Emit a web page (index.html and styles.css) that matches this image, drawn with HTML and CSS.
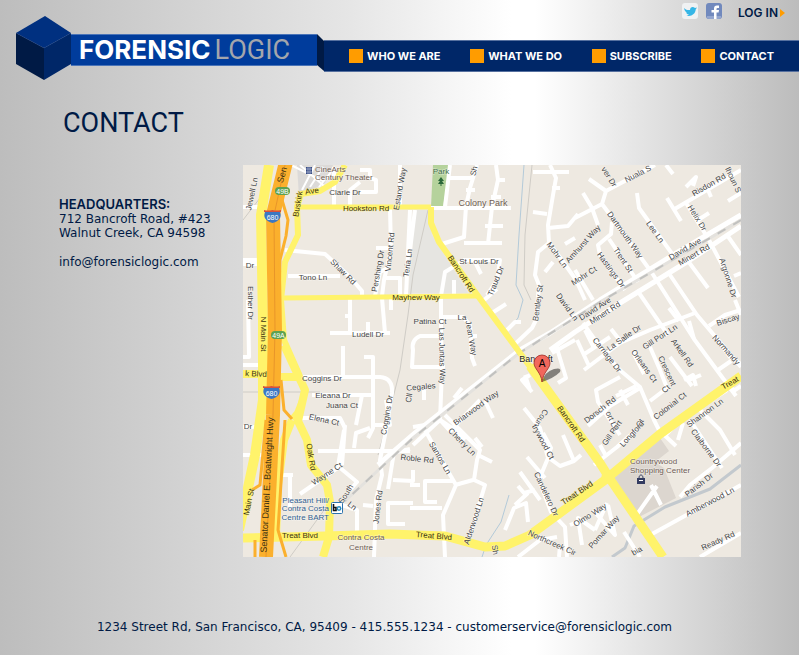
FILE: index.html
```html
<!DOCTYPE html>
<html lang="en">
<head>
<meta charset="utf-8">
<title>Forensic Logic - Contact</title>
<meta name="viewport" content="width=device-width, initial-scale=1">
<link rel="stylesheet" href="styles.css">
</head>
<body>
<header class="header">
  <a class="brand" href="#">
    <svg class="cube" viewBox="0 0 55 64" aria-hidden="true">
      <path fill="#003080" d="M29 0 55 17 28 32 0 17z"/>
      <path fill="#001a45" d="M0 17 28 32V64L0 48z"/>
      <path fill="#002768" d="M55 17 28 32V64L55 48z"/>
      <path fill="none" stroke="#1b4590" stroke-width=".4" d="M0 17 28 32 55 17"/>
    </svg>
    <span class="ribbon"><b>FORENSIC</b><span class="light">LOGIC</span></span>
    <svg class="fold" viewBox="0 0 7 37" aria-hidden="true"><path fill="#001a45" d="M0 0 7 7V37L0 31z"/></svg>
  </a>
  <div class="side">
    <div class="utility">
      <a class="social" href="#" aria-label="Twitter">
        <svg viewBox="0 0 16 16"><rect width="16" height="16" rx="3" fill="#f0f2f3"/><path fill="#35b6e6" d="M2 5c2 2 4 2.300 6 2 0-3 3-4 5-2l2-.5-1.300 2C13.500 11 9 14 4.500 12.500c1.500-.2 2-.6 2.500-1-2-.4-2.500-1.200-3-2h1C3 8.500 2.500 7 2 5z"/></svg>
      </a>
      <a class="social" href="#" aria-label="Facebook">
        <svg viewBox="0 0 16 16"><rect width="16" height="16" rx="3" fill="#7189bd"/><path fill="#94a6cf" d="M1 13h14v1.500q-1 1.500-3 1.500H4q-2 0-3-1.500z"/><path fill="#fff" d="M8 16V9.500H5.500V7H8V5.500C8 3.500 9 2.500 11 2.500h2V5h-1.500q-1 0-1 1v1H13l-.4 2.500h-2.100V16z"/></svg>
      </a>
      <a class="login" href="#">LOG IN<svg viewBox="0 0 5 8" aria-hidden="true"><path fill="#ff9c00" d="M0 0 5 4 0 8z"/></svg></a>
    </div>
    <nav class="nav">
      <a href="#">WHO WE ARE</a>
      <a href="#">WHAT WE DO</a>
      <a href="#">SUBSCRIBE</a>
      <a href="#">CONTACT</a>
    </nav>
  </div>
</header>

<main class="main">
  <h1>CONTACT</h1>
  <div class="columns">
    <address class="office">
      <h2>HEADQUARTERS:</h2>
      <p>712 Bancroft Road, #423<br>Walnut Creek, CA 94598</p>
      <p><a href="mailto:info@forensiclogic.com">info@forensiclogic.com</a></p>
    </address>
    <svg class="map" viewBox="243 165 498 392" role="img" aria-label="Map of Bancroft Road, Walnut Creek">
      <rect class="land" x="243" y="165" width="498" height="392"/>
      <path fill="#b5d29c" d="M433 165h17l-7 42h-12z"/>
      <path fill="#e6e5e1" d="M413 210h15l4 25 36 58h-60l5-40z"/>
      <path fill="#dcd6cf" d="M612 478 660 438 669 451 655 462 664 468 676 498 637 518z"/>
      <path fill="#dcdad8" d="M297 165h36l-8 18-26 14z"/>
      <g class="water">
        <path d="M524 165 519 235 516 285 523 300 518 318 508 330"/>
        <path d="M509 495 501 522 486 545 482 557"/>
        <path class="wide" d="M741 465 710 489 665 507 634 526 625 548 612 557"/>
      </g>
      <g class="track">
        <path d="M532 165 525 235 524 285 531 300"/>
        <path d="M428 210 413 275 408 315 400 370 385 430 378 455"/>
        <path d="M243 220 270 185"/>
        <path d="M243 392H320M330 502 290 557"/>
      </g>
      <g class="road">
        <path d="M243 207H262M243 264H258M243 260H258M248 300 249 357H243M243 365H262M243 455H262M243 427H256"/>
        <path d="M334 167V206M350 206V190L360 182M360 192H376V180L370 178V170H360M400 165V205"/>
        <path d="M285 250 325 254 350 277 362 291V296M288 276H340"/>
        <path d="M390 208 391 250 384 280 382 296M375 296 380 272 388 268M384 278H400V296M410 210 406 296M415 210 410 250M376 248H390"/>
        <path d="M350 298V333M345 316H350M330 333H390M382 298 385 333M368 322V333M391 298V310"/>
        <path d="M343 346V376M364 357H373V428L368 438M362 395H373M300 377H380Q393 378 392 393L386 430M312 395H362L356 425M300 418H340L345 428M373 425H390L386 400"/>
        <path d="M345 425 342 465M354 448 356 433 370 428M318 451H410M290 475V507M275 475H293M300 494 339 467 357 482 350 490M338 466 344 430M386 430 380 460 382 475 376 500 374 557M383 425 386 430M394 452 388 489M392 453 410 449M393 480 413 481V470M413 503H388V524H405M357 533V510L350 508M363 505 373 506M342 505 351 508"/>
        <path class="fine" d="M291 165 323 181M300 165 324 186M315 165 302 190M323 167 310 187M331 172 319 187"/>
        <path d="M431 208H511M450 165 445 207M449 178H472M477 165 470 188 466 206 464 237 442 244M496 165 498 180 492 207 488 244M464 243H502M485 226H503M491 197H501M497 180H505M466 190H475"/>
        <path d="M463 260H500L497 280 487 295M463 261 445 272 441 296M454 280V296M474 260 481 274"/>
        <path d="M550 165 556 178 553 195 548 225 549 243M533 172H569M533 212 547 214M552 188H560M548 228 568 226 578 214M549 243 538 252 535 275 539 285 536 320 532 328 515 344M549 243 562 260 576 280 585 300M553 262 545 272"/>
        <path d="M507 330 515 322 521 322M492 313 506 304M483 301 497 289"/>
        <path d="M575 218 602 204 606 191 655 165M589 179 606 191M583 193 592 208 598 225M602 204 611 216 652 273M612 222 611 234 598 245 600 255 625 290M609 239 638 282M637 193 639 208 673 255M666 165 673 174M686 187 696 177 693 186M667 198 681 221M673 210 741 170M686 203 709 240 739 297M706 185 711 197M698 220 709 213M728 201 741 193M727 235 741 255M652 273 694 339 736 396M688 261 708 288M734 276 741 273M668 272 697 315 741 367"/>
        <path d="M575 238 565 244M575 270 593 300M637 290 668 335M585 330 593 346M583 355 610 337M577 340 589 366M583 323 605 354 621 371 640 387 654 420 662 436M611 329 622 343M584 370 620 343 650 330 695 313M650 347 660 370 667 388 650 401M633 352 644 374M694 339 689 321M689 380 701 375M669 308 679 321M696 386 693 375 684 380M670 357 692 386M620 377 596 390 598 402 620 435M628 405 620 390M616 396 636 386M588 426 610 406 640 388"/>
        <path d="M709 326 725 315 741 310M716 337 730 357 741 364M718 370 731 361M735 300 741 315M720 385 735 390 741 386M727 390 680 420 665 436M683 423 678 440M700 410 720 430 735 455M741 443 712 468 690 485 680 497M690 420 722 468M660 431 676 446M594 465 617 447 636 430M600 445 606 456"/>
        <path d="M652 534 741 485M624 532 640 557M700 557 741 533M633 520 657 486M651 485 661 505M595 530 578 518 582 545M593 510 615 535 608 505M607 503 595 530"/>
        <path d="M441 298V328L442 370 440 420 450 431 480 400M442 317H463L470 325 472 358 475 366M441 336H420Q411 340 413 350L412 367H445M454 398 462 388M440 420 455 430 465 440M413 427 425 425M413 445 440 420M485 401 493 418M424 400V388M470 336H477"/>
        <path d="M425 430 445 466 456 485 443 515 445 557M445 415 480 450 477 460 474 480 485 485 468 541M475 438 482 447M478 455 492 462M473 480 455 485M453 481H425V502H437M410 508H442M410 485H420"/>
        <path d="M525 375 530 390M530 375 522 380 532 392M556 345 566 378 558 383M552 353 575 340M524 408 540 428 548 458 543 470 539 480 551 512 565 527 567 557M527 457 545 478M520 472 530 486 540 500M549 458 560 466 574 461 581 455M543 433 551 448 547 456M563 435 574 461M518 486 524 493 535 490M505 530 514 508 526 503 528 522M528 493 515 505M555 515 570 508M518 557 540 540 557 537M560 545 559 557M570 525 582 520"/>
        <path d="M741 215 678 252 600 300 550 333 520 350 415 433 378 465M741 226 690 260 620 303 575 332 550 350" class="wide"/>
      </g>
      <path class="rail-bed" d="M741 220 600 302 518 354 413 438 345 501"/>
      <path class="rail" d="M741 220 600 302 518 354 413 438 345 501"/>
      <g class="yellow">
        <path stroke-width="10" d="M269 165 261 215 263 320 263 400 255 455 239 530"/>
        <path stroke-width="6" d="M345 165 335 182 320 191 301 194 297 207 298 235 285 262 281 300 284 340 299 374 305 393 297 413 292 419M281 377H302"/>
        <path stroke-width="8" d="M243 374H262M284 345 297 373 305 390 298 421 307 440 311 465 327 485 330 502 329 537 323 557M292 420 284 440 278 485 276 537M264 377H300"/>
        <path stroke-width="5" d="M297 207H431M283 298 477 296"/>
        <path stroke-width="9" d="M243 538 325 536 390 534 445 536 485 547 505 546 530 535 605 480 660 434 741 376"/>
        <path stroke-width="6" d="M431 207V223L439 242 478 296 534 372"/>
        <path stroke-width="9" d="M530 366 600 463 610 479 663 557"/>
        <circle cx="608" cy="477" r="5" stroke-width="3"/>
      </g>
      <g class="highway">
        <path stroke-width="14" d="M286 162 273 215 275 330 273 415 266 557"/>
        <path stroke-width="3" d="M282 200 288 220 286 236 280 260 279 300M281 380 284 410 292 419M266 420 260 485 252 490M285 420 278 530 286 557M255 557V540"/>
        <path class="median" d="M285 165 274 215 275 330 273 415 266 557"/>
      </g>

      <g class="label">
        <text transform="translate(252 194) rotate(-78)">Jewell Ln</text>
        <text x="345" y="192">Clarie Dr</text>
        <text transform="translate(400 189) rotate(-80)">Estand Way</text>
        <text transform="translate(378 271) rotate(-80)">Pershing Dr</text>
        <text transform="translate(390 252) rotate(-84)">Vincent Rd</text>
        <text transform="translate(408 263) rotate(-82)">Teria Ln</text>
        <text transform="translate(343 272) rotate(45)">Shaw Rd</text>
        <text x="313" y="277">Tono Ln</text>
        <text x="250" y="265">Dr</text>
        <text transform="translate(250 303) rotate(90)">Esther Dr</text>
        <text transform="translate(474 171) rotate(-75)">Sh</text>
        <text x="479" y="261">St Louis Dr</text>
        <text transform="translate(496 281) rotate(-68)">Traud Dr</text>
        <text transform="translate(557 255) rotate(54)">Mohr Ln</text>
        <text transform="translate(583 244) rotate(-48)">Amhurst Way</text>
        <text transform="translate(538 303) rotate(-82)">Bentley St</text>
        <text transform="translate(584 276) rotate(-33)">Mohr Ct</text>
        <text transform="translate(609 177) rotate(58)">ver Dr</text>
        <text transform="translate(638 174) rotate(-27)">Nuala S</text>
        <text transform="translate(709 185) rotate(-30)">Risdon Rd</text>
        <text transform="translate(733 180) rotate(65)">lhoun S</text>
        <text transform="translate(625 235) rotate(54)">Dartmouth Way</text>
        <text transform="translate(655 232) rotate(54)">Lee Ln</text>
        <text transform="translate(697 218) rotate(58)">Helix Dr</text>
        <text transform="translate(623 260) rotate(56)">Trent St</text>
        <text transform="translate(611 270) rotate(54)">Hastings Dr</text>
        <text transform="translate(685 249) rotate(-30)">David Ave</text>
        <text transform="translate(694 255) rotate(-30)">Minert Rd</text>
        <text transform="translate(728 278) rotate(72)">Argonne Dr</text>
        <text x="368" y="334">Ludell Dr</text>
        <text x="322" y="378">Coggins Dr</text>
        <text x="333" y="395">Eleana Dr</text>
        <text x="342" y="405">Juana Ct</text>
        <text transform="translate(324 420) rotate(12)">Elena Ct</text>
        <text x="248" y="426">Dr</text>
        <text transform="translate(387 415) rotate(-80)">Coggins Dr</text>
        <text x="430" y="321">Patina Ct</text>
        <text x="462" y="317">La</text>
        <text transform="translate(471 338) rotate(80)">Jean Way</text>
        <text transform="translate(442 356) rotate(89)">Las Juntas Way</text>
        <text transform="translate(421 387) rotate(-5)">Cegales</text>
        <text transform="translate(409 398) rotate(-80)">Cll</text>
        <text transform="translate(476 408) rotate(-36)">Briarwood Way</text>
        <text transform="translate(567 307) rotate(54)">David Ln</text>
        <text transform="translate(541 418) rotate(122)">Coun</text>
        <text transform="translate(543 442) rotate(62)">trywood Ct</text>
        <text transform="translate(595 309) rotate(-33)">David Ave</text>
        <text transform="translate(605 313) rotate(-33)">Minert Rd</text>
        <text transform="translate(624 338) rotate(-35)">La Salle Dr</text>
        <text transform="translate(660 337) rotate(-33)">Gill Port Ln</text>
        <text transform="translate(607 355) rotate(52)">Carriage Dr</text>
        <text transform="translate(682 353) rotate(55)">Arkell Rd</text>
        <text transform="translate(644 366) rotate(54)">Orleans Ct</text>
        <text transform="translate(667 371) rotate(65)">Crescent</text>
        <text transform="translate(666 389) rotate(-40)">Ct</text>
        <text transform="translate(728 320) rotate(-18)">Biscay</text>
        <text transform="translate(726 350) rotate(48)">Normandy</text>
        <text transform="translate(670 406) rotate(-38)">Colonial Ct</text>
        <text transform="translate(600 410) rotate(-38)">Dorsch Rd</text>
        <text transform="translate(705 413) rotate(-36)">Shannon Ln</text>
        <text transform="translate(612 421) rotate(65)">ort Ln</text>
        <text transform="translate(640 423) rotate(-60)">Ct</text>
        <text transform="translate(327 474) rotate(-33)">Wayne Ct</text>
        <text transform="translate(346 494) rotate(-58)">South</text>
        <text transform="translate(352 506) rotate(38)">Ln</text>
        <text transform="translate(378 507) rotate(-83)">Jones Rd</text>
        <text transform="translate(417 459) rotate(6)">Roble Rd</text>
        <text transform="translate(440 458) rotate(60)">Santos Ln</text>
        <text transform="translate(462 442) rotate(45)">Cherry Ln</text>
        <text transform="translate(474 521) rotate(-72)">Alderwood Ln</text>
        <text transform="translate(495 550) rotate(80)">Sh</text>
        <text transform="translate(546 494) rotate(65)">Candelero Dr</text>
        <text transform="translate(552 543) rotate(24)">Northcreek Cir</text>
        <text transform="translate(612 433) rotate(-55)">Gill Port</text>
        <text transform="translate(632 434) rotate(-48)">Longford</text>
        <text transform="translate(706 448) rotate(53)">Claiborne Dr</text>
        <text transform="translate(699 485) rotate(-38)">Parish Dr</text>
        <text transform="translate(710 502) rotate(-28)">Amberwood Ln</text>
        <text transform="translate(718 541) rotate(-24)">Ready Rd</text>
        <text transform="translate(590 515) rotate(-32)">Olmo Way</text>
        <text transform="translate(604 532) rotate(-48)">Pomar Way</text>
        <text transform="translate(637 551) rotate(-30)">bia</text>
      </g>
      <g class="label major">
        <text transform="translate(298 204) rotate(-80)">Buskirk</text>
        <text transform="translate(312 191) rotate(-8)">Ave</text>
        <text x="366" y="208">Hookston Rd</text>
        <text x="416" y="297">Mayhew Way</text>
        <text transform="translate(461 274) rotate(57)">Bancroft Rd</text>
        <text transform="translate(571 424) rotate(55)">Bancroft Rd</text>
        <text transform="translate(263 334) rotate(90)">N Main St</text>
        <text transform="translate(256 374) rotate(3)">k Blvd</text>
        <text transform="translate(249 502) rotate(-78)">Main St</text>
        <text transform="translate(311 457) rotate(80)">Oak Rd</text>
        <text x="300" y="535">Treat Blvd</text>
        <text transform="translate(434 536) rotate(5)">Treat Blvd</text>
        <text transform="translate(577 493) rotate(-34)">Treat Blvd</text>
        <text transform="translate(730 383) rotate(-30)">Treat</text>
        <text class="freeway" transform="translate(267 485) rotate(-87)">Senator Daniel E. Boatwright Hwy</text>
        <text class="freeway" transform="translate(282 175) rotate(-75)">Sen</text>
      </g>
      <g class="label place">
        <text class="start" x="315" y="169">CineArts</text>
        <text class="start" x="315" y="177">Century Theater</text>
        <text x="361" y="537">Contra Costa</text>
        <text x="361" y="547">Centre</text>
        <text class="town" x="483" y="203">Colony Park</text>
        <text class="start" x="630" y="461">Countrywood</text>
        <text class="start" x="630" y="470">Shopping Center</text>
        <text class="green" x="441" y="171">Park</text>
        <text class="city" x="536" y="359">Bancroft</text>
      </g>
      <g class="label transit">
        <text x="329" y="500">Pleasant Hill/</text>
        <text x="329" y="508">Contra Costa</text>
        <text x="329" y="517">Centre BART</text>
      </g>

      <rect x="306" y="167" width="6" height="7" fill="#354a83"/>
      <path stroke="#c3cbe0" stroke-width=".6" d="M306 169h6M306 172h6M308 167v7M310 167v7"/>
      <path fill="#2c683b" d="M441 177l3 4h-2l2 3h-2.500v2h-1v-2H438l2-3h-2z"/>
      <path fill="#343c61" d="M637 478h8v6h-8z"/>
      <path fill="none" stroke="#343c61" d="M639 478c0-4 4-4 4 0"/>
      <path fill="#fff" d="M639 480h4v1h-4z"/>
      <rect x="331.500" y="502.500" width="11" height="11" rx="1" fill="#fff" stroke="#2b72ad"/>
      <path fill="none" stroke="#111" stroke-width="1.600" d="M333.500 504v6.500h2.500v-3h-2.500"/>
      <circle cx="339" cy="508.500" r="1.700" fill="none" stroke="#278bc0" stroke-width="1.500"/>
      <g class="exit">
        <rect x="275" y="187" width="15" height="8" rx="4"/><text x="282.500" y="191">49B</text>
        <rect x="271" y="331" width="15" height="8" rx="4"/><text x="278.500" y="335">49A</text>
      </g>
      <g class="shield">
        <path d="M265 212h15q3 8-7.500 11Q262 220 265 212z"/><path class="crown" d="M264 210q4 1 8.500 0 4 1 8.500 0v2h-17z"/><text x="272.500" y="217">680</text>
        <path d="M264 388h15q3 8-7.500 11Q261 396 264 388z"/><path class="crown" d="M263 386q4 1 8.500 0 4 1 8.500 0v2h-17z"/><text x="271.500" y="393">680</text>
      </g>
      <path fill="#000" opacity=".45" d="M542 382Q544 372 554 369 562 367 560 372 554 378 542 382z"/>
      <path fill="#f2675c" stroke="#9c2d27" stroke-width=".8" d="M542 382C541 372 534 369 534 363a8 8 0 0 1 16 0C550 369 543 372 542 382z"/>
      <text class="pin" x="542" y="363">A</text>
    </svg>
  </div>
</main>

<footer class="footer">1234 Street Rd, San Francisco, CA, 95409 - 415.555.1234 - customerservice@forensiclogic.com</footer>
</body>
</html>
```
FILE: styles.css
```css
* {
  box-sizing: border-box;
}

html {
  min-height: 100%;
  background: linear-gradient(90deg, #bdbdbd 0%, #d9d9d9 30%, #e6e6e6 44%, #fff 64%, #fff 67%, #bcbcbc 100%);
}

body {
  margin: 0;
  color: #001a45;
  font: 12px/14px "DejaVu Sans", Verdana, sans-serif;
}

a {
  color: inherit;
  text-decoration: none;
}

.header {
  display: flex;
  align-items: flex-start;
}

.brand {
  display: flex;
  align-items: flex-start;
  padding: 16px 0 0 16px;
}

.cube {
  width: 55px;
  height: 64px;
}

.ribbon {
  display: flex;
  align-items: center;
  width: 246px;
  height: 32px;
  margin-top: 18px;
  padding-left: 8px;
  gap: 4px;
  background: #003c9c;
  border: solid #4a74b8;
  border-width: 1px 0;
  color: #fff;
}

.ribbon b {
  font: 700 26px/30px "Inter", "Liberation Sans", sans-serif;
}

.light {
  color: #a3a6ac;
  font: 400 27px/30px "Roboto", "Liberation Sans", sans-serif;
}

.fold {
  width: 7px;
  height: 37px;
  margin-top: 18px;
}

.side {
  flex: 1;
}

.utility {
  display: flex;
  justify-content: flex-end;
  align-items: flex-start;
  gap: 8px;
  height: 40px;
  padding: 3px 14px 0 0;
}

.social,
.social svg {
  display: block;
  width: 16px;
  height: 16px;
}

.login {
  display: flex;
  align-items: center;
  gap: 2px;
  margin-left: 8px;
  font: 600 12px/20px "Inter", "Liberation Sans", sans-serif;
}

.login svg {
  width: 5px;
  height: 8px;
}

.nav {
  display: flex;
  justify-content: space-between;
  align-items: center;
  height: 32px;
  padding: 0 25px;
  background: #002768;
  border: solid #56709f;
  border-width: 1px 0;
  color: #fff;
  font: 700 11px/14px "Inter", "Liberation Sans", sans-serif;
}

.nav a {
  display: flex;
  align-items: center;
  gap: 4px;
}

.nav a::before {
  content: "";
  width: 14px;
  height: 14px;
  background: #ff9c00;
}

.main {
  padding: 28px 58px 0 59px;
}

h1 {
  margin: 0 0 27px 4px;
  font: 400 27px/30px "Roboto", "Liberation Sans", sans-serif;
}

.columns {
  display: grid;
  grid-template-columns: 184px 1fr;
}

.office {
  padding-top: 32px;
  font-style: normal;
}

.office h2 {
  margin: 0;
  font: 600 13px/15px "Inter", "Liberation Sans", sans-serif;
}

.office p {
  margin: 0 0 15px;
  white-space: nowrap;
}

.map {
  display: block;
  width: 100%;
  height: auto;
}

.land {
  fill: #eee9e1;
}

.water,
.track,
.road,
.yellow,
.highway {
  fill: none;
  stroke-linejoin: round;
}

.water {
  stroke: #b3cad9;
  stroke-width: 1;
}

.water .wide {
  stroke: #c3c9ce;
  stroke-width: 3;
}

.track {
  stroke: #cfccc6;
  stroke-width: 1;
}

.road {
  stroke: #fff;
  stroke-width: 4;
}

.road .wide {
  stroke-width: 5;
}

.road .fine {
  stroke-width: 2;
}

.rail-bed,
.rail {
  fill: none;
  stroke: #e4e2de;
  stroke-width: 3;
}

.rail {
  stroke: #c1c1bf;
  stroke-width: 2;
  stroke-dasharray: 9 9;
}

.yellow {
  stroke: #fff36b;
}

.highway {
  stroke: #fbb02d;
}

.highway .median {
  stroke: #e8952a;
  stroke-width: 1;
}

.label text,
.exit text,
.shield text,
.pin {
  fill: #444;
  font: 8px "Liberation Sans", Arial, sans-serif;
  text-anchor: middle;
  dominant-baseline: central;
}

.label text {
  stroke: #fff;
  stroke-width: 1px;
  stroke-opacity: 0.5;
  paint-order: stroke;
}

.label.major text {
  fill: #3b3212;
  stroke: #fff36b;
}

.label.major .freeway {
  font-size: 9px;
  stroke: none;
}

.label.place text {
  fill: #6d5a50;
}

.label .start,
.label.place .start {
  text-anchor: start;
}

.label.place .town {
  font-size: 9px;
}

.label.place .green {
  fill: #3d6b45;
}

.label.place .city {
  fill: #222;
  font-size: 9px;
}

.label.transit text {
  fill: #315e8e;
  text-anchor: end;
}

.exit rect {
  fill: #5da150;
}

.exit text,
.shield text {
  fill: #fff;
  font-size: 7px;
}

.shield path {
  fill: #3b77c2;
}

.shield .crown {
  fill: #d8503c;
}

.pin {
  fill: #000;
  font-size: 10px;
}

.footer {
  padding: 63px 30px 21px 0;
  text-align: center;
}
```
